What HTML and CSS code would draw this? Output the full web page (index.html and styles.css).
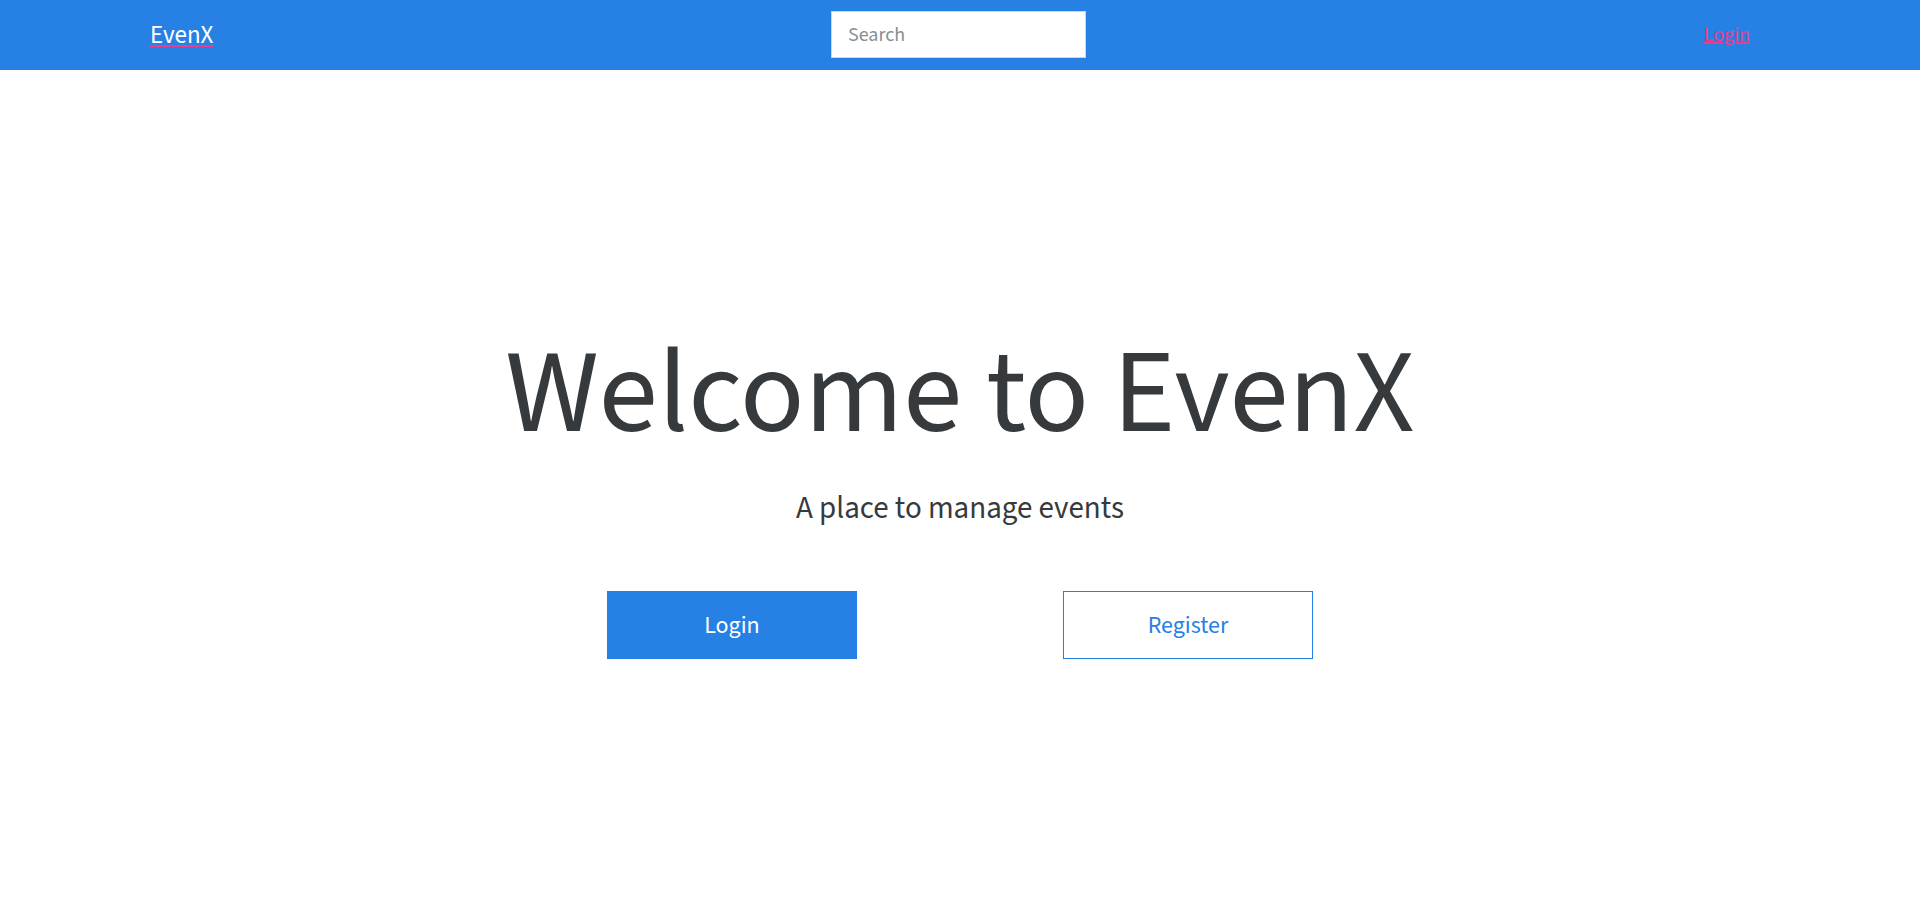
FILE: index.html
```html
<!DOCTYPE html>
<html lang="en">
<head>
<meta charset="utf-8">
<title>EvenX</title>
<link rel="stylesheet" href="styles.css">
</head>
<body>
<nav class="navbar">
  <a class="brand" href="#">EvenX</a>
  <input class="search" type="text" placeholder="Search">
  <a class="nav-login" href="#">Login</a>
</nav>
<main class="hero">
  <h1 class="title">Welcome to EvenX</h1>
  <p class="lead">A place to manage events</p>
  <div class="actions">
    <a class="btn btn-primary" href="#">Login</a>
    <a class="btn btn-outline" href="#">Register</a>
  </div>
</main>
</body>
</html>
```

FILE: styles.css
```css
* { box-sizing: border-box; }

html, body {
  margin: 0;
  padding: 0;
  background: #ffffff;
}

body {
  font-family: "Source Sans Pro", "Source Sans 3", Lato, "Liberation Sans", sans-serif;
  color: #373a3c;
}

.navbar {
  height: 70px;
  background: #2780e3;
  display: grid;
  grid-template-columns: 681px 255px 1fr;
  align-items: center;
  padding: 0 170px 0 150px;
}

.brand {
  justify-self: start;
  color: #ffffff;
  font-size: 25px;
  text-decoration: underline;
  text-decoration-color: #e83e8c;
  text-decoration-thickness: 2px;
  text-underline-offset: 2px;
  line-height: 1;
}

.search {
  width: 255px;
  height: 47px;
  margin-top: -1px;
  border: 1px solid #ced4da;
  background: #ffffff;
  padding: 0 16px;
  font-family: inherit;
  font-size: 20px;
  color: #495057;
  outline: none;
  border-radius: 0;
}

.search::placeholder {
  color: #868e96;
}

.nav-login {
  justify-self: end;
  color: #e83e8c;
  font-size: 20px;
  text-decoration: underline;
  line-height: 1;
}

.hero {
  display: flex;
  flex-direction: column;
  align-items: center;
  padding-top: 265px;
}

.title {
  margin: 0;
  font-size: 119px;
  font-weight: 400;
  line-height: 1;
  color: #373a3c;
}

.lead {
  margin: 36px 0 0;
  font-size: 31px;
  font-weight: 400;
  line-height: 1.2;
  color: #373a3c;
}

.actions {
  display: flex;
  gap: 206px;
  margin-top: 64px;
}

.btn {
  width: 250px;
  height: 68px;
  display: flex;
  align-items: center;
  justify-content: center;
  font-size: 24px;
  text-decoration: none;
  border: 1px solid #2780e3;
}

.btn-primary {
  background: #2780e3;
  color: #ffffff;
}

.btn-outline {
  background: #ffffff;
  color: #2780e3;
}
```
